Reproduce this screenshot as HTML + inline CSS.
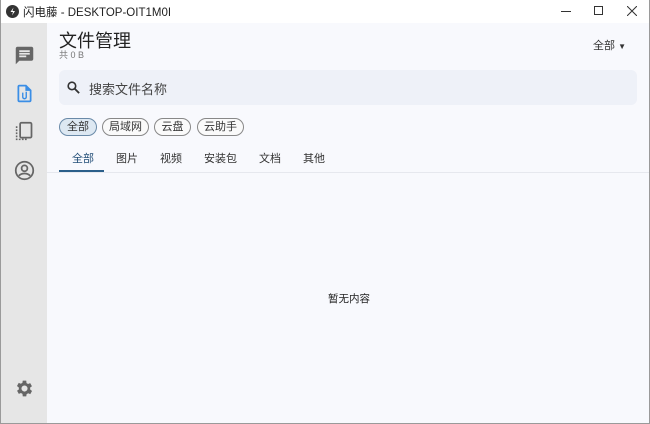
<!DOCTYPE html>
<html><head><meta charset="utf-8"><style>
*{margin:0;padding:0;box-sizing:border-box}
body{width:650px;height:424px;overflow:hidden;background:#f8f9fd;font-family:"Liberation Sans","Noto Sans CJK SC",sans-serif;position:relative;color:#222}
.win{position:absolute;inset:0;border:1px solid #9a9a9a;border-top:none}
.title{position:absolute;left:0;top:0;width:650px;height:23px;background:#fff;font-size:12px}
.side{position:absolute;left:1px;top:23px;width:46px;height:400px;background:#e6e6e6}
.ic{position:absolute;left:13px}
.main{position:absolute;left:47px;top:23px;right:1px;bottom:1px}
.chip{position:absolute;top:95px;height:18px;border:1px solid #888;border-radius:9px;font-size:11px;line-height:16px;text-align:center;color:#333;background:#fafafa}
.tab{position:absolute;top:127px;font-size:11px;color:#333}
</style></head><body>
<div class="title">
<svg style="position:absolute;left:6px;top:5px" width="13" height="13" viewBox="0 0 13 13"><circle cx="6.5" cy="6.5" r="6.5" fill="#333"/><path d="M7.5 2.5 4.5 7h2.5l-1 3.5 3-4.5H6.5z" fill="#fff"/></svg>
<span style="position:absolute;left:23px;top:4px;font-size:11.5px">闪电藤 - DESKTOP-OIT1M0I</span>
<div style="position:absolute;left:561px;top:11px;width:10px;height:1px;background:#333"></div>
<div style="position:absolute;left:594px;top:6px;width:9px;height:9px;border:1px solid #333"></div>
<svg style="position:absolute;left:627px;top:6px" width="10" height="10"><path d="M0 0 10 10M10 0 0 10" stroke="#333" stroke-width="1"/></svg>
</div>
<div class="side">
<svg class="ic" style="top:22px" width="21" height="21" viewBox="0 0 24 24"><path d="M20 2H4c-1.1 0-2 .9-2 2v18l4-4h14c1.1 0 2-.9 2-2V4c0-1.1-.9-2-2-2zM6 9h12v2H6zm8 5H6v-2h8zm4-6H6V6h12z" fill="#666"/></svg>
<svg class="ic" style="top:60px" width="21" height="21" viewBox="0 0 24 24"><path d="M14 2H6c-1.1 0-2 .9-2 2v16c0 1.1.9 2 2 2h12c1.1 0 2-.9 2-2V8zm4 18H6V4h7v5h5z" fill="#3a8ee6"/><path d="M10 11v5a2 2 0 0 0 4 0v-6" stroke="#3a8ee6" stroke-width="1.6" fill="none"/></svg>
<svg class="ic" style="top:98px" width="21" height="21" viewBox="0 0 24 24"><rect x="7" y="2" width="13" height="17" rx="1.5" fill="none" stroke="#666" stroke-width="2"/><path d="M3 6v15h12" stroke="#666" stroke-width="1.8" stroke-dasharray="2 1.5" fill="none"/></svg>
<svg class="ic" style="top:137px" width="21" height="21" viewBox="0 0 24 24"><circle cx="12" cy="12" r="10" fill="none" stroke="#666" stroke-width="2"/><circle cx="12" cy="9.5" r="3.3" fill="none" stroke="#666" stroke-width="2"/><path d="M5.5 18c3.5-3.5 9.5-3.5 13 0" stroke="#666" stroke-width="2" fill="none"/></svg>
<svg class="ic" style="top:355px" width="21" height="21" viewBox="0 0 24 24"><path d="M19.4 13a7.5 7.5 0 0 0 0-2l2.1-1.6-2-3.5-2.5 1a7 7 0 0 0-1.7-1L15 3h-4l-.4 2.6a7 7 0 0 0-1.7 1l-2.5-1-2 3.5L6.6 11a7.5 7.5 0 0 0 0 2l-2.1 1.6 2 3.5 2.5-1a7 7 0 0 0 1.7 1L11 21h4l.4-2.6a7 7 0 0 0 1.7-1l2.5 1 2-3.5zM13 15.5a3.5 3.5 0 1 1 0-7 3.5 3.5 0 0 1 0 7z" transform="translate(-1 0)" fill="#666"/></svg>
</div>
<div class="main">
<div style="position:absolute;left:12px;top:4px;font-size:18px;color:#222">文件管理</div>
<div style="position:absolute;left:12px;top:25px;font-size:9px;color:#777">共 0 B</div>
<div style="position:absolute;left:546px;top:14px;font-size:11px;color:#333">全部 <span style="font-size:8px">▼</span></div>
<div style="position:absolute;left:12px;top:47px;width:578px;height:35px;background:#eef1f8;border-radius:6px">
<svg style="position:absolute;left:7px;top:10px" width="15" height="15" viewBox="0 0 24 24"><circle cx="9.5" cy="9.5" r="6" fill="none" stroke="#333" stroke-width="2.6"/><path d="M14 14l7 7" stroke="#333" stroke-width="3"/></svg>
<span style="position:absolute;left:30px;top:9px;font-size:13px;color:#444">搜索文件名称</span>
</div>
<div class="chip" style="left:12px;width:38px;background:#dde8f2;border-color:#6a8aa8">全部</div>
<div class="chip" style="left:55px;width:47px">局域网</div>
<div class="chip" style="left:107px;width:37px">云盘</div>
<div class="chip" style="left:150px;width:47px">云助手</div>
<div class="tab" style="left:25px;color:#234f78">全部</div>
<div class="tab" style="left:69px">图片</div>
<div class="tab" style="left:113px">视频</div>
<div class="tab" style="left:157px">安装包</div>
<div class="tab" style="left:212px">文档</div>
<div class="tab" style="left:256px">其他</div>
<div style="position:absolute;left:12px;top:147px;width:45px;height:2px;background:#2b5f8a"></div>
<div style="position:absolute;left:0;top:149px;right:0;height:1px;background:#e6e8ee"></div>
<div style="position:absolute;left:281px;top:268px;font-size:10.5px;color:#222">暂无内容</div>
</div>
<div class="win"></div>
</body></html>
